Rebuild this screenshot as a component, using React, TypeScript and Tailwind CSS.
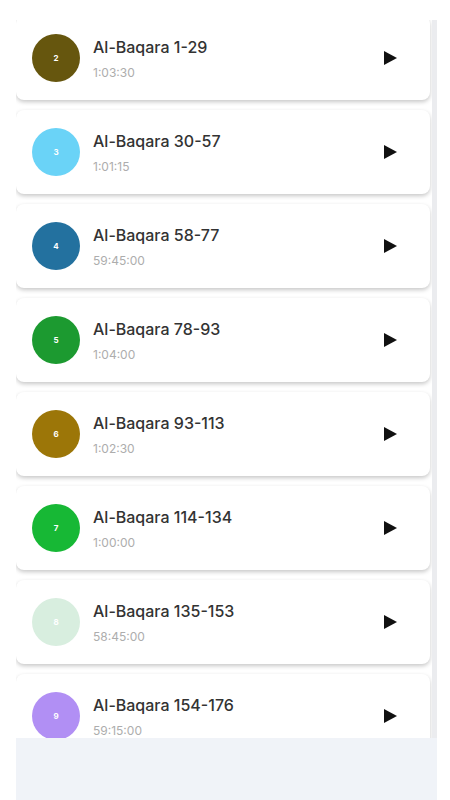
const tracks = [
  { n: 2, title: 'Al-Baqara 1-29', time: '1:03:30', color: 'bg-[#66560e]' },
  { n: 3, title: 'Al-Baqara 30-57', time: '1:01:15', color: 'bg-[#6ad3f7]' },
  { n: 4, title: 'Al-Baqara 58-77', time: '59:45:00', color: 'bg-[#23719f]' },
  { n: 5, title: 'Al-Baqara 78-93', time: '1:04:00', color: 'bg-[#1c9a30]' },
  { n: 6, title: 'Al-Baqara 93-113', time: '1:02:30', color: 'bg-[#9c7608]' },
  { n: 7, title: 'Al-Baqara 114-134', time: '1:00:00', color: 'bg-[#17b835]' },
  { n: 8, title: 'Al-Baqara 135-153', time: '58:45:00', color: 'bg-[#d8eedf]' },
  { n: 9, title: 'Al-Baqara 154-176', time: '59:15:00', color: 'bg-[#b18ff4]' },
];

function PlayIcon() {
  return (
    <svg width="16" height="16" viewBox="0 0 16 16">
      <path d="M2 1 L15 8 L2 15 Z" fill="#111" />
    </svg>
  );
}

export default function App() {
  return (
    <div className="w-[450px] h-[800px] bg-white flex flex-col pl-4 pr-[13px] font-['Inter',sans-serif]">
      <div className="h-5 shrink-0" />

      {/* scrolled list */}
      <div className="h-[718px] shrink-0 overflow-hidden flex">
        <div className="flex-1 flex flex-col gap-[10px] -mt-1">
          {tracks.map((t) => (
            <div
              key={t.n}
              className="h-[84px] shrink-0 rounded-lg bg-white shadow-[0_2px_4px_rgba(0,0,0,0.22)] flex items-center pl-4"
            >
              <div className={`w-12 h-12 rounded-full ${t.color} flex items-center justify-center`}>
                <span className="text-white text-[8px] font-bold">{t.n}</span>
              </div>
              <div className="ml-[13px] flex flex-col">
                <span className="text-[16px] leading-5 font-medium text-[#333333]">{t.title}</span>
                <span className="mt-[9px] text-[12px] leading-[14px] text-[#adadad]">{t.time}</span>
              </div>
              <div className="ml-auto mr-[32px]">
                <PlayIcon />
              </div>
            </div>
          ))}
        </div>
        <div className="w-[5px] ml-[2px] bg-[#ebecef]" />
      </div>

      <div className="flex-1 bg-[#f0f3f8]" />
    </div>
  );
}
